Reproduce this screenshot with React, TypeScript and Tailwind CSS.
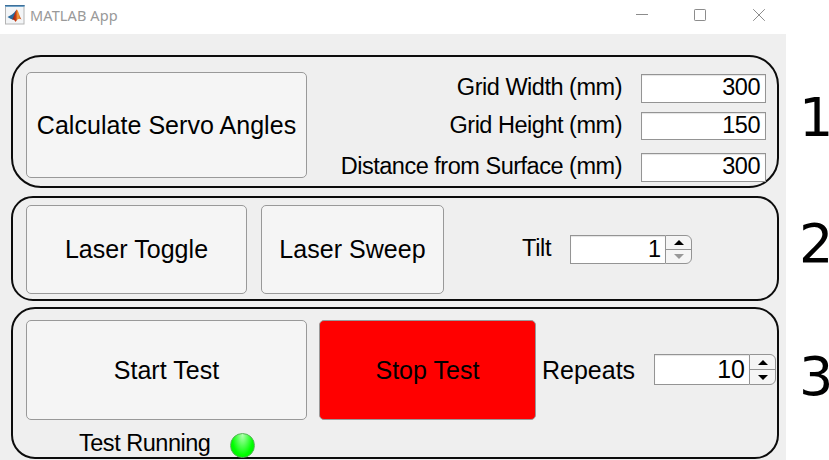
import type { ReactNode } from "react";

function AppButton({ className, children }: { className: string; children: ReactNode }) {
  return (
    <button className={`flex shrink-0 items-center justify-center whitespace-nowrap rounded-[5px] border border-[#999] text-[25px] leading-none tracking-[0.04px] ${className}`}>
      {children}
    </button>
  );
}

function NumberRow({ label, value, className }: { label: string; value: string; className: string }) {
  return (
    <div className={`flex items-start justify-end gap-[19px] ${className}`}>
      <span className="-mt-px whitespace-nowrap text-[23.5px] leading-[28px] tracking-[-0.48px]">{label}</span>
      <div className="h-full w-[125px] border border-[#949494] bg-white pr-[5px] text-right text-[23.5px] leading-[25px] tracking-[-0.5px] shadow-[inset_0_1px_1px_#e4e4e4]">
        {value}
      </div>
    </div>
  );
}

function Spinner({ value, atMinimum, className, textClass }: { value: string; atMinimum?: boolean; className: string; textClass: string }) {
  return (
    <div className={`flex w-[122px] shrink-0 ${className}`}>
      <div className={`flex-1 border border-r-0 border-[#949494] bg-white pr-[4px] text-right shadow-[inset_0_1px_1px_#e4e4e4] ${textClass}`}>
        {value}
      </div>
      <div className="flex w-[27px] flex-col overflow-hidden rounded-r-[6px] border border-[#949494] bg-[#f5f5f5]">
        <div className="flex flex-1 items-center justify-center border-b border-[#949494]">
          <svg width="10" height="5" viewBox="0 0 10 5"><path d="M0 5 L5 0 L10 5Z" fill="#000" /></svg>
        </div>
        <div className="flex flex-1 items-center justify-center">
          <svg width="10" height="5" viewBox="0 0 10 5"><path d="M0 0 L5 5 L10 0Z" fill={atMinimum ? "#999" : "#000"} /></svg>
        </div>
      </div>
    </div>
  );
}

function MatlabIcon() {
  return (
    <svg width="20" height="20" viewBox="0 0 20 20">
      <defs>
        <linearGradient id="membrane" x1="0" x2="1">
          <stop offset="0" stopColor="#7c1c12" />
          <stop offset=".4" stopColor="#c63a14" />
          <stop offset=".62" stopColor="#f5a03a" />
          <stop offset="1" stopColor="#c23a12" />
        </linearGradient>
      </defs>
      <rect x=".5" y=".5" width="18.5" height="18.5" fill="#f3f5f7" stroke="#b4b4b4" />
      <rect x="0" y="0" width="19.5" height="2" fill="#6fa2c8" />
      <rect x="0" y="0" width="19.5" height="1" fill="#3d6f99" />
      <path d="M2.5 12 L7 9.5 L9 7.8 L11.8 4.5 L9.5 13 L7.5 14.5 L5.5 13.7Z" fill="#28699d" />
      <path d="M7 14.5 C9 13 10 6 11.8 4.5 C13.3 5.6 14.5 11.5 16.5 14.5 C14.5 12.8 12.5 14 10.5 17 C10 15.5 8.6 14.2 7 14.5Z" fill="url(#membrane)" />
    </svg>
  );
}

function TitleBar() {
  return (
    <header className="flex h-[34px] items-start bg-white">
      <div className="pl-[5px] pt-[5px]"><MatlabIcon /></div>
      <span className="pl-[5px] pt-[5px] font-[Noto_Sans,sans-serif] text-[14.5px] leading-[20px] tracking-[0.12px] text-[#999]">MATLAB App</span>
      <div className="ml-auto flex gap-[45px] pr-[20px] pt-[8px] text-[#8c8c8c]">
        <svg width="14" height="14" viewBox="0 0 14 14"><path d="M2 6.5H14" stroke="currentColor" /></svg>
        <svg width="14" height="14" viewBox="0 0 14 14"><rect x="1.5" y="1.5" width="11" height="11" rx=".7" fill="none" stroke="currentColor" /></svg>
        <svg width="14" height="14" viewBox="0 0 14 14"><path d="M1.2 1.2L12.8 12.8M12.8 1.2L1.2 12.8" stroke="currentColor" /></svg>
      </div>
    </header>
  );
}

function Numeral({ className, children }: { className: string; children: ReactNode }) {
  return <div className={`text-[54px] leading-[60px] tracking-[-5px] ${className}`}>{children}</div>;
}

export default function App() {
  return (
    <div className="flex h-[460px] w-[829px] overflow-hidden bg-white font-['Liberation_Sans',Arial,sans-serif] text-black">
      <main className="w-[786px] shrink-0 bg-[#efefef]">
        <TitleBar />
        <div className="flex flex-col pl-[11px] pt-[21px]">
          <section className="flex h-[133px] w-[768px] rounded-[30px] border-2 border-[#0c0c0c] pl-[13px] pt-[15px]">
            <AppButton className="h-[106px] w-[281px] bg-[#f5f5f5]">Calculate Servo Angles</AppButton>
            <div className="flex flex-1 flex-col pr-[11px] pt-[2px]">
              <NumberRow className="h-[29px]" label="Grid Width (mm)" value="300" />
              <NumberRow className="mt-[9px] h-[28px]" label="Grid Height (mm)" value="150" />
              <NumberRow className="mt-[13px] h-[29px]" label="Distance from Surface (mm)" value="300" />
            </div>
          </section>

          <section className="mt-2 flex h-[105px] w-[768px] rounded-[22px] border-2 border-[#0c0c0c] pl-[13px] pt-[7px]">
            <AppButton className="h-[89px] w-[221px] bg-[#f5f5f5]">Laser Toggle</AppButton>
            <AppButton className="ml-[14px] h-[89px] w-[183px] bg-[#f5f5f5]">Laser Sweep</AppButton>
            <span className="ml-[78px] w-[48px] pt-[29px] text-[23.5px] leading-[28px] tracking-[-0.3px]">Tilt</span>
            <Spinner className="mt-[30px] h-[29px]" textClass="text-[23.5px] leading-[27px]" value="1" atMinimum />
          </section>

          <section className="mt-1.5 h-[152px] w-[768px] rounded-[24px] border-2 border-[#0c0c0c] pl-[13px] pt-[11px]">
            <div className="flex">
              <AppButton className="h-[100px] w-[281px] bg-[#f5f5f5]">Start Test</AppButton>
              <AppButton className="ml-[12px] h-[100px] w-[217px] bg-[#ff0000]">Stop Test</AppButton>
              <span className="ml-[6px] w-[112px] pt-[36px] text-[25px] leading-[28px]">Repeats</span>
              <Spinner className="mt-[34px] h-[31px]" textClass="text-[25px] leading-[29px]" value="10" />
            </div>
            <div className="flex pl-[53px]">
              <span className="w-[151px] whitespace-nowrap pt-[9px] text-[23.5px] leading-[28px] tracking-[-0.48px]">Test Running</span>
              <span className="mt-[13px] size-[25px] rounded-full border border-[#55b455] bg-[radial-gradient(ellipse_at_50%_5%,#b0ffb0_0%,#50ff50_35%,#00ff00_65%,#00e800_100%)]" />
            </div>
          </section>
        </div>
      </main>

      <aside className="flex flex-1 flex-col whitespace-nowrap font-['DejaVu_Sans',sans-serif]">
        <Numeral className="pl-[13px] pt-[88px]">1</Numeral>
        <Numeral className="pl-[13px] pt-[66px]">2</Numeral>
        <Numeral className="pl-[13px] pt-[73px]">3</Numeral>
      </aside>
    </div>
  );
}
